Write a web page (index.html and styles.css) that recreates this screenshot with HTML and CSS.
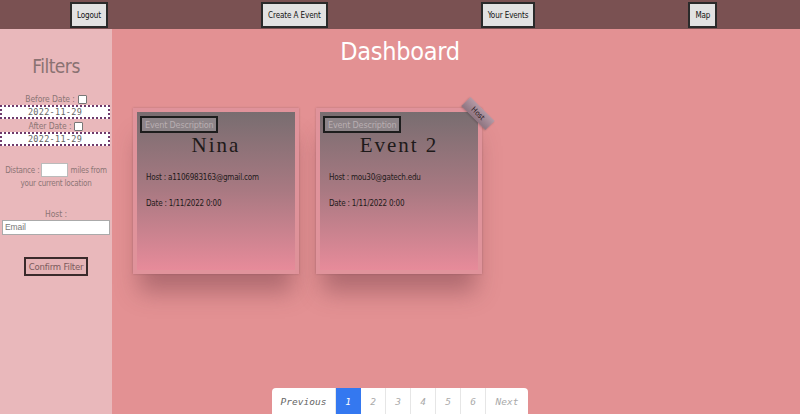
FILE: index.html
```html
<!DOCTYPE html>
<html>
<head>
<meta charset="utf-8">
<link rel="stylesheet" href="styles.css">
</head>
<body>
<header class="topbar">
  <button class="nav-btn">Logout</button>
  <button class="nav-btn">Create A Event</button>
  <button class="nav-btn">Your Events</button>
  <button class="nav-btn">Map</button>
</header>
<div class="layout">
  <aside class="sidebar">
    <h2 class="filters-title">Filters</h2>
    <div class="row">Before Date : <span class="check"></span></div>
    <div class="date-input">2022-11-29</div>
    <div class="row">After Date : <span class="check"></span></div>
    <div class="date-input">2022-11-29</div>
    <div class="distance">Distance : <span class="dist-input"></span> miles from<br>your current location</div>
    <div class="host-label">Host :</div>
    <div class="email-input">Email</div>
    <button class="confirm-btn">Confirm Filter</button>
  </aside>
  <main class="content">
    <h1 class="title">Dashboard</h1>
    <div class="cards">
      <div class="card">
        <button class="desc-btn">Event Description</button>
        <div class="card-title">Nina</div>
        <p class="card-line">Host : a1106983163@gmail.com</p>
        <p class="card-line">Date : 1/11/2022 0:00</p>
      </div>
      <div class="card">
        <div class="ribbon">Host</div>
        <button class="desc-btn">Event Description</button>
        <div class="card-title">Event 2</div>
        <p class="card-line">Host : mou30@gatech.edu</p>
        <p class="card-line">Date : 1/11/2022 0:00</p>
      </div>
    </div>
    <nav class="pager-wrap">
      <ul class="pager">
        <li class="pg prev">Previous</li>
        <li class="pg num active">1</li>
        <li class="pg num">2</li>
        <li class="pg num">3</li>
        <li class="pg num">4</li>
        <li class="pg num">5</li>
        <li class="pg num">6</li>
        <li class="pg next">Next</li>
      </ul>
    </nav>
  </main>
</div>
</body>
</html>
```
FILE: styles.css
```css
* { box-sizing: border-box; }
html, body { margin: 0; padding: 0; }
body {
  width: 800px;
  height: 414px;
  overflow: hidden;
  font-family: "DejaVu Sans Condensed", "Liberation Sans", sans-serif;
  background: #e39193;
}
.topbar {
  height: 29px;
  background: #7a5152;
  display: flex;
  align-items: flex-start;
  padding: 2px 0 0 70px;
  gap: 153px;
}
.nav-btn {
  height: 26px;
  padding: 0 5px;
  background: #e2e2e2;
  border: 2px solid #2a2a2a;
  font-family: inherit;
  font-size: 8px;
  letter-spacing: -0.1px;
  color: #111;
}
.layout {
  display: flex;
  height: 385px;
}
.sidebar {
  width: 112px;
  flex: none;
  background: #e9b8bb;
  text-align: center;
  color: #8c7575;
  font-size: 8.5px;
  letter-spacing: -0.1px;
  padding-top: 24px;
}
.filters-title {
  margin: 0 0 14px;
  font-size: 19px;
  font-weight: normal;
  color: #8a7272;
  line-height: 26px;
  letter-spacing: -0.5px;
}
.row {
  line-height: 12px;
  display: flex;
  justify-content: center;
  align-items: center;
  gap: 3px;
}
.check {
  width: 9px;
  height: 9px;
  background: #fff;
  border: 1px solid #777;
  border-radius: 1px;
  display: inline-block;
}
.date-input {
  width: 110px;
  height: 14px;
  border: 2px dotted #6e3a6c;
  background: #fff;
  font-family: "DejaVu Sans Mono", monospace;
  font-size: 8.5px;
  line-height: 10px;
  color: #666;
  letter-spacing: 0.3px;
  margin-bottom: 1px;
}
.distance {
  margin-top: 17px;
  line-height: 13px;
  padding: 0;
  font-size: 8px;
  letter-spacing: -0.2px;
}
.dist-input {
  display: inline-block;
  width: 27px;
  height: 14px;
  background: #fff;
  border: 1px solid #bbb;
  vertical-align: middle;
}
.host-label {
  margin-top: 18px;
  line-height: 12px;
}
.email-input {
  margin: 0 2px;
  height: 15px;
  background: #fff;
  border: 1px solid #aaa;
  text-align: left;
  padding-left: 2px;
  font-family: "Liberation Sans", sans-serif;
  font-size: 8.5px;
  line-height: 13px;
  color: #777;
}
.confirm-btn {
  margin-top: 22px;
  height: 19px;
  padding: 0 3px;
  background: #e5b3b6;
  border: 2px solid #3a2a2b;
  font-family: inherit;
  font-size: 9.5px;
  letter-spacing: -0.2px;
  color: #7a5a5b;
}
.content {
  flex: 1;
  display: flex;
  flex-direction: column;
  padding-left: 21px;
}
.title {
  margin: 6px 0 0;
  padding-right: 133px;
  text-align: center;
  font-size: 25px;
  font-weight: normal;
  line-height: 34px;
  color: #fff;
  letter-spacing: -0.3px;
}
.cards {
  display: flex;
  gap: 17px;
  margin-top: 39px;
}
.card {
  position: relative;
  width: 166px;
  height: 166px;
  border: 4px solid #e0939b;
  background: linear-gradient(to bottom, #786d70 0%, #a97982 50%, #e78b9a 100%);
  box-shadow: 0 24px 22px -6px rgba(100, 50, 60, 0.4), 0 0 2px rgba(120, 70, 80, 0.4);
  padding: 4px 3px;
}
.desc-btn {
  display: block;
  height: 17px;
  padding: 0 3px;
  background: #8d8488;
  border: 2px solid #1d1d1d;
  font-family: inherit;
  font-size: 9px;
  letter-spacing: -0.2px;
  color: #b9aeb1;
}
.card-title {
  text-align: center;
  font-family: "Liberation Serif", serif;
  font-size: 21px;
  letter-spacing: 2px;
  color: #1e1a1a;
  line-height: 22px;
  margin-top: 1px;
}
.card-line {
  margin: 14px 0 0 6px;
  font-size: 8px;
  letter-spacing: -0.2px;
  color: #1e1a1a;
  line-height: 16px;
}
.card-line + .card-line { margin-top: 10px; }
.ribbon {
  position: absolute;
  top: -5px;
  right: -17px;
  width: 34px;
  height: 13px;
  transform: rotate(45deg);
  background: linear-gradient(to bottom, #b59aa6, #8d7480);
  font-size: 7.5px;
  line-height: 13px;
  text-align: center;
  color: #2a1a22;
  box-shadow: 0 1px 2px rgba(0,0,0,0.2);
}
.pager-wrap {
  margin-top: auto;
  padding-right: 133px;
  display: flex;
  justify-content: center;
}
.pager {
  list-style: none;
  margin: 0 0 -1px;
  padding: 0;
  display: flex;
  height: 27px;
  background: #fff;
  border-radius: 4px 4px 0 0;
  font-family: "DejaVu Sans Mono", monospace;
  font-style: italic;
  font-size: 9.5px;
}
.pg {
  display: flex;
  align-items: center;
  justify-content: center;
  color: #aaa;
  border-right: 1px solid #e6e6e6;
}
.prev { width: 64px; color: #666; }
.num { width: 25px; }
.next { width: 42px; border-right: none; }
.active { background: #3478f0; color: #fff; border-right-color: #3478f0; }
```
